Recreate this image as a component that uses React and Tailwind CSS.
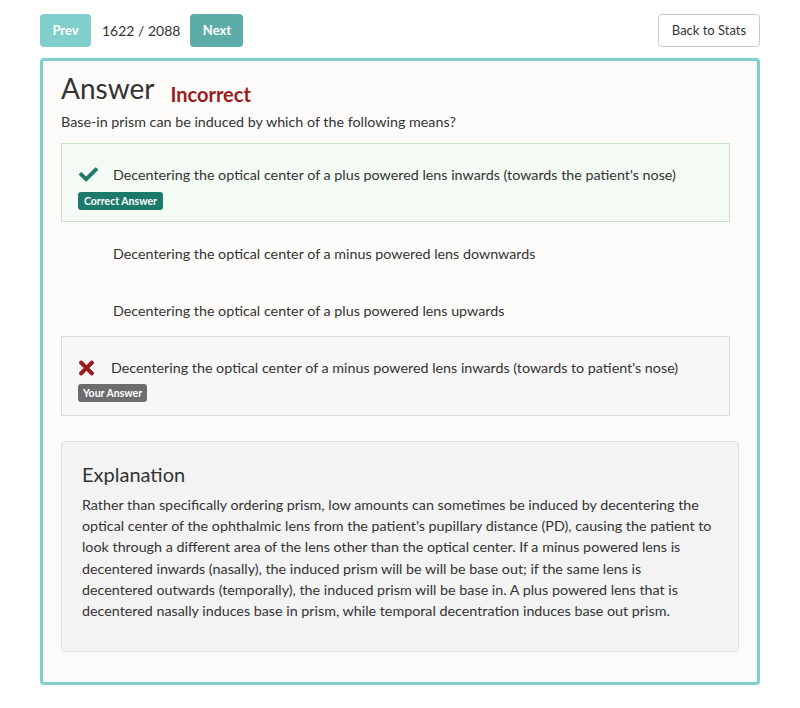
import React from "react";

function Check() {
  return (
    <svg viewBox="0 0 512 512" width="21" height="19" className="text-[#1f7a6b]" fill="currentColor">
      <path d="M173.898 439.404l-166.4-166.4c-9.997-9.997-9.997-26.206 0-36.204l36.203-36.204c9.997-9.998 26.207-9.998 36.204 0L192 312.69 432.095 72.596c9.997-9.997 26.207-9.997 36.204 0l36.203 36.204c9.997 9.997 9.997 26.206 0 36.204l-294.4 294.401c-9.998 9.997-26.207 9.997-36.204-.001z" />
    </svg>
  );
}

function Times() {
  return (
    <svg viewBox="0 0 352 512" width="17" height="22" className="text-[#9b1b1b]" fill="currentColor">
      <path d="M242.72 256l100.07-100.07c12.28-12.28 12.28-32.19 0-44.48l-22.24-22.24c-12.28-12.28-32.19-12.28-44.48 0L176 189.28 75.93 89.21c-12.28-12.28-32.19-12.28-44.480 0L9.21 111.45c-12.28 12.28-12.28 32.19 0 44.48L109.28 256 9.21 356.07c-12.28 12.28-12.28 32.19 0 44.48l22.24 22.240c12.28 12.28 32.2 12.28 44.48 0L176 322.72l100.07 100.07c12.28 12.28 32.2 12.28 44.48 0l22.24-22.24c12.28-12.28 12.28-32.19 0-44.48L242.72 256z" />
    </svg>
  );
}

export default function App() {
  return (
    <div className="min-h-[708px] bg-white px-10 pt-[14px] text-[#333] font-['Lato','Open_Sans',sans-serif]">
      <div className="flex items-center">
        <button className="h-[33px] w-[51px] rounded bg-[#80cfcc] text-[13px] font-bold text-white">Prev</button>
        <span className="ml-[11px] text-[14px] text-[#333]">1622 / 2088</span>
        <button className="ml-[10px] h-[33px] w-[53px] rounded bg-[#5eaca8] text-[13px] font-bold text-white">Next</button>
        <button className="ml-auto h-[33px] w-[102px] rounded border border-[#ccc] bg-white text-[13px] text-[#333]">Back to Stats</button>
      </div>

      <div className="mt-[11px] rounded border-[3px] border-[#7ecfcc] bg-[#fdfcfa] px-[18px] pb-[30px] pt-[9px]">
        <div className="flex items-end">
          <h1 className="text-[28px] leading-[36px] text-[#333]">Answer</h1>
          <span className="mb-[-3px] ml-[16px] text-[20px] font-bold leading-[30px] text-[#9b1c1c]">Incorrect</span>
        </div>
        <p className="mt-[5px] text-[14.3px] leading-[21px]">Base-in prism can be induced by which of the following means?</p>

        <div className="mt-[11px] mr-[9px]">
          <div className="border border-[#c5e5c5] bg-[#f4fbf4] px-4 pb-[14px] pt-5">
            <div className="flex h-[21px] items-center">
              <div className="w-[35px]"><Check /></div>
              <span className="text-[14.3px]">Decentering the optical center of a plus powered lens inwards (towards the patient's nose)</span>
            </div>
            <div className="h-[22px] pt-[2px]">
              <span className="inline-block rounded-[3px] bg-[#1b7a69] px-[6px] text-[10.5px] font-bold leading-[18px] text-white">Correct Answer</span>
            </div>
          </div>

          <div className="border border-transparent px-4 pb-[14px] pt-5">
            <div className="flex h-[21px] items-center">
              <div className="w-[35px]"></div>
              <span className="text-[14.3px]">Decentering the optical center of a minus powered lens downwards</span>
            </div>
          </div>

          <div className="border border-transparent px-4 pb-[14px] pt-5">
            <div className="flex h-[21px] items-center">
              <div className="w-[35px]"></div>
              <span className="text-[14.3px]">Decentering the optical center of a plus powered lens upwards</span>
            </div>
          </div>

          <div className="border border-[#dcdcdc] bg-[#f7f7f7] px-4 pb-[14px] pt-5">
            <div className="flex h-[21px] items-center">
              <div className="w-[33px]"><Times /></div>
              <span className="text-[14.3px]">Decentering the optical center of a minus powered lens inwards (towards to patient's nose)</span>
            </div>
            <div className="h-[23px] pt-[1px]">
              <span className="inline-block rounded-[3px] bg-[#6d6d6d] px-[5px] text-[10.5px] font-bold leading-[18px] text-white">Your Answer</span>
            </div>
          </div>
        </div>

        <div className="mt-[25px] rounded border border-[#e1e1e1] bg-[#f3f3f3] px-5 pb-[30px] pt-5">
          <h2 className="text-[20px] leading-[24px]">Explanation</h2>
          <p className="mt-[8px] text-[14.3px] leading-[21.2px]">
            Rather than specifically ordering prism, low amounts can sometimes be induced by decentering the<br />
            optical center of the ophthalmic lens from the patient's pupillary distance (PD), causing the patient to<br />
            look through a different area of the lens other than the optical center. If a minus powered lens is<br />
            decentered inwards (nasally), the induced prism will be will be base out; if the same lens is<br />
            decentered outwards (temporally), the induced prism will be base in. A plus powered lens that is<br />
            decentered nasally induces base in prism, while temporal decentration induces base out prism.
          </p>
        </div>
      </div>
    </div>
  );
}
